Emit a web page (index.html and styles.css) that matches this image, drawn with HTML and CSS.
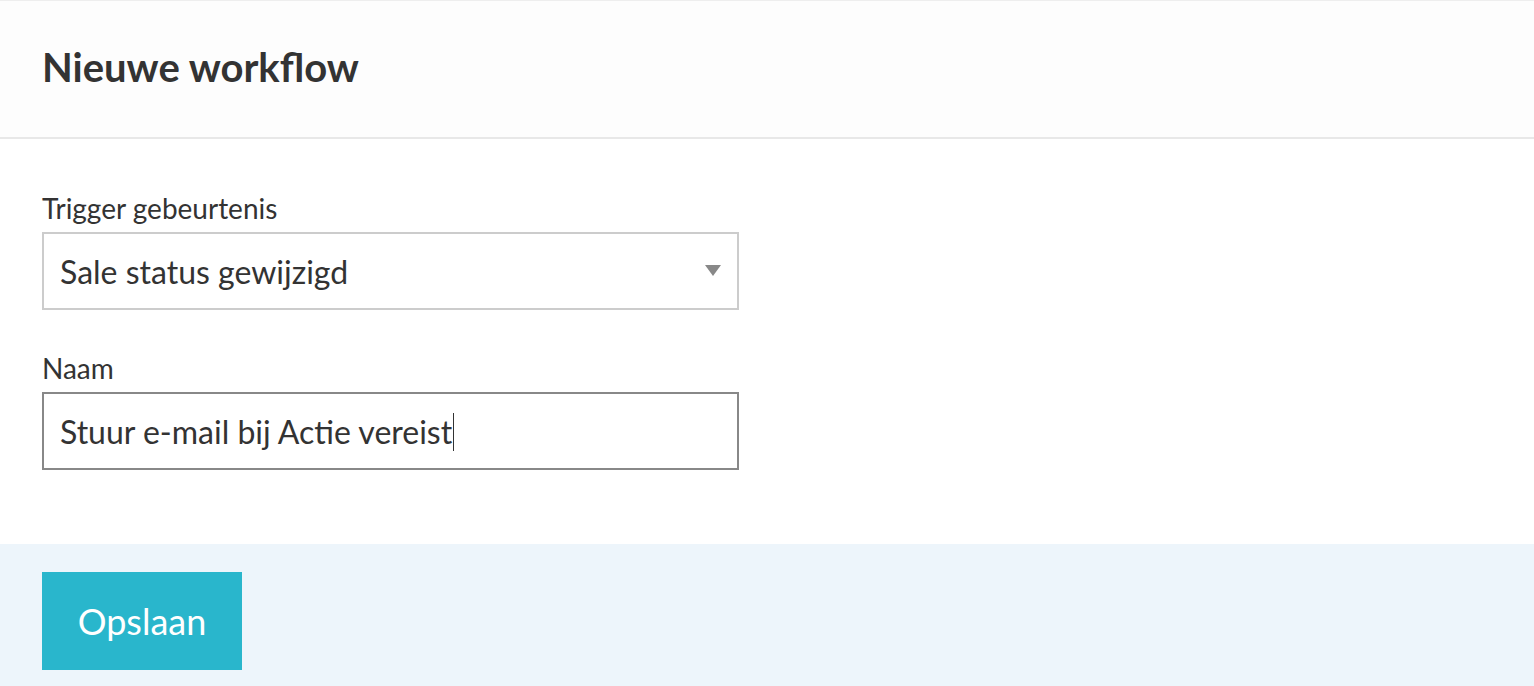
FILE: index.html
```html
<!DOCTYPE html>
<html lang="nl">
<head>
    <meta charset="UTF-8">
    <title>Nieuwe workflow</title>
    <link rel="stylesheet" href="styles.css">
</head>
<body>

    <div class="modal">
        <div class="modal-header">
            <h1>Nieuwe workflow</h1>
        </div>

        <div class="modal-body">
            <div class="field">
                <label for="trigger">Trigger gebeurtenis</label>
                <div class="select-wrap">
                    <select id="trigger">
                        <option>Sale status gewijzigd</option>
                    </select>
                    <span class="arrow"></span>
                </div>
            </div>

            <div class="field">
                <label for="name">Naam</label>
                <div class="text-input focused">
                    <span class="value">Stuur e-mail bij Actie vereist</span><span class="caret"></span>
                </div>
            </div>
        </div>

        <div class="modal-footer">
            <button class="save">Opslaan</button>
        </div>
    </div>

</body>
</html>
```

FILE: styles.css
```css
/* Modal layout */
body {
    margin: 0;
    padding: 0;
    font-family: Lato, "Open Sans", Arial, sans-serif;
    color: #333;
    background-color: #fff;
}
.modal {
    border-top: 1px solid #eee;
}
.modal-header {
    height: 138px;
    box-sizing: border-box;
    background-color: #fdfdfd;
    border-bottom: 2px solid #e8e8e8;
    padding: 42px 42px 0;
}
.modal-header h1 {
    margin: 0;
    font-size: 40px;
    line-height: 48px;
    font-weight: 700;
    color: #333;
}
.modal-body {
    padding: 52px 42px 74px;
}
.field {
    width: 697px;
    margin-bottom: 41px;
}
.field:last-child {
    margin-bottom: 0;
}
.field label {
    display: block;
    font-size: 28px;
    line-height: 34px;
    margin-bottom: 7px;
    color: #333;
}
.select-wrap {
    position: relative;
}
.select-wrap select {
    display: block;
    width: 100%;
    height: 78px;
    appearance: none;
    -webkit-appearance: none;
    border: 2px solid #ccc;
    border-radius: 0;
    background-color: #fff;
    padding: 0 16px;
    font-family: inherit;
    font-size: 32px;
    color: #333;
    outline: none;
}
.select-wrap .arrow {
    position: absolute;
    right: 18px;
    top: 33px;
    width: 0;
    height: 0;
    border-left: 8px solid transparent;
    border-right: 8px solid transparent;
    border-top: 11px solid #888;
}
.text-input {
    height: 78px;
    box-sizing: border-box;
    border: 2px solid #888;
    padding: 0 16px;
    display: flex;
    align-items: center;
    font-size: 32px;
    color: #333;
}
.text-input .caret {
    display: inline-block;
    width: 1px;
    height: 38px;
    background-color: #333;
    margin-left: 1px;
    margin-top: 2px;
}
.modal-footer {
    background-color: #edf5fb;
    padding: 28px 42px;
}
.save {
    display: block;
    width: 200px;
    height: 98px;
    border: none;
    border-radius: 0;
    background-color: #29b6cc;
    color: #fff;
    font-family: inherit;
    font-size: 36px;
    cursor: pointer;
}
```
